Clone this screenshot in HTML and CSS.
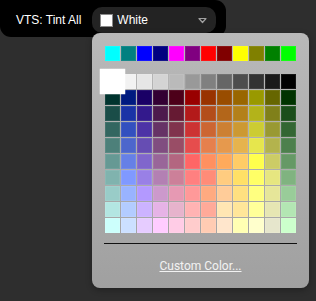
FILE: index.html
```html
<!DOCTYPE html>
<html lang="en">
<head>
    <meta charset="UTF-8">
    <meta name="viewport" content="width=device-width, initial-scale=1.0">
    <title>Tint Picker</title>
    <link rel="stylesheet" href="styles.css">
</head>
<body>
    <div class="toolbar">
        <span class="tool-label">VTS: Tint All</span>
        <div class="select">
            <span class="select-swatch"></span>
            <span class="select-text">White</span>
            <svg class="select-arrow" width="9" height="7" viewBox="0 0 9 7">
                <path d="M1 1.5 H8 L4.5 5.5 Z" fill="none" stroke="#a0a0a0" stroke-width="1.2" stroke-linejoin="round"/>
            </svg>
        </div>
    </div>

    <div class="color-popup">
        <div class="swatch-grid" id="basicRow"></div>
        <div class="swatch-grid main-grid" id="mainGrid"></div>
        <hr class="popup-rule">
        <div class="custom-link"><a href="#">Custom Color...</a></div>
    </div>

<script>
    const basicColors = ['#00ffff', '#008080', '#0000ff', '#000080', '#ff00ff', '#800080', '#ff0000', '#800000', '#ffff00', '#808000', '#008000', '#00ff00'];
    const paletteRows = [
        ['#ffffff', '#f2f2f2', '#e6e6e6', '#d4d4d4', '#bababa', '#999999', '#808080', '#666666', '#4d4d4d', '#333333', '#1a1a1a', '#000000'],
        ['#00332e', '#001a80', '#1a0066', '#330033', '#4d0019', '#990000', '#993300', '#994d00', '#996600', '#999900', '#666600', '#003300'],
        ['#1a4d48', '#1a33a6', '#33198c', '#4d1a4d', '#661a33', '#b31a1a', '#b34d1a', '#b3661a', '#b3801a', '#b3b31a', '#80801a', '#1a4d1a'],
        ['#336660', '#3350bf', '#4d33a6', '#663366', '#80334d', '#cc3333', '#cc6633', '#cc8033', '#cc9933', '#cccc33', '#999933', '#336633'],
        ['#4d807a', '#4d66cc', '#664db3', '#804d80', '#994d66', '#e64d4d', '#e6804d', '#e6994d', '#e6b34d', '#e6e64d', '#b3b34d', '#4d804d'],
        ['#669994', '#6680e6', '#8066cc', '#996699', '#b36680', '#ff6666', '#ff9060', '#ffaa5c', '#ffcc66', '#ffff4d', '#cccc66', '#669966'],
        ['#80b3ae', '#8099ff', '#9980e6', '#b380b3', '#cc8099', '#ff8080', '#ff8c78', '#ffcc80', '#ffe066', '#ffff66', '#e6e680', '#80b380'],
        ['#99ccc8', '#99b3ff', '#b399ff', '#cc99cc', '#e699b3', '#ff9999', '#ffaa80', '#ffcc99', '#ffe080', '#ffff80', '#e6e699', '#99cc99'],
        ['#b3e6e2', '#b3ccff', '#ccb3ff', '#e6b3e6', '#e6b3cc', '#ffb3b3', '#ffaa99', '#ffe6b3', '#ffe699', '#ffff99', '#e6e6b3', '#b3e6b3'],
        ['#ccfffc', '#cce0ff', '#e6ccff', '#ffccff', '#ffcce6', '#ffcccc', '#ffccb3', '#ffe6cc', '#ffffb3', '#ffffcc', '#e6e6cc', '#ccffcc']
    ];
    const selectedColor = '#ffffff';

    function addSwatch(grid, color) {
        const cell = document.createElement('div');
        cell.className = 'swatch';
        if (color === selectedColor) cell.classList.add('is-selected');
        cell.style.background = color;
        cell.title = color;
        grid.appendChild(cell);
    }

    const basicRow = document.getElementById('basicRow');
    basicColors.forEach(c => addSwatch(basicRow, c));

    const mainGrid = document.getElementById('mainGrid');
    paletteRows.forEach(row => row.forEach(c => addSwatch(mainGrid, c)));
</script>
</body>
</html>
```

FILE: styles.css
```css
html, body { margin: 0; padding: 0; }
body { background-color: #2e2e2e; font-family: "Liberation Sans", Arial, sans-serif; font-size: 12px; color: #fff; width: 316px; height: 301px; overflow: hidden; position: relative; }

.toolbar { display: inline-flex; align-items: center; gap: 11px; background-color: #000; padding: 7px 10px 4px 16px; border-radius: 0 11px 11px 11px; }
.tool-label { color: #fff; font-size: 12px; }

.select { display: flex; align-items: center; width: 108px; height: 26px; padding: 0 8px; background-color: #232323; border-radius: 10px; }
.select-swatch { width: 11px; height: 11px; background: #fff; border: 1px solid #8a8a8a; margin-right: 4px; }
.select-text { flex: 1; color: #fff; }
.select-arrow { margin-right: 1px; }

.color-popup { position: absolute; left: 92px; top: 33px; width: 191px; padding: 13px 13px 14px; background: linear-gradient(#b9b9b9, #a0a0a0); border-radius: 8px; box-shadow: 0 2px 6px rgba(0,0,0,0.3); }

.swatch-grid { display: grid; grid-template-columns: repeat(12, 15px); grid-auto-rows: 15px; gap: 1px; }
.main-grid { margin-top: 13px; }
.swatch { width: 15px; height: 15px; box-shadow: inset 0 0 0 1px rgba(255,255,255,0.08); }
.swatch.is-selected { transform: scale(1.7); position: relative; z-index: 2; box-shadow: none; }

.popup-rule { border: 0; border-top: 1px solid #111; margin: 10px 0 0 -1px; width: 193px; }

.custom-link { margin-top: 15px; text-align: center; line-height: 15px; }
.custom-link a { color: #f2f2f2; font-family: Roboto, "Liberation Sans", sans-serif; font-size: 12px; text-decoration: underline; }
```
